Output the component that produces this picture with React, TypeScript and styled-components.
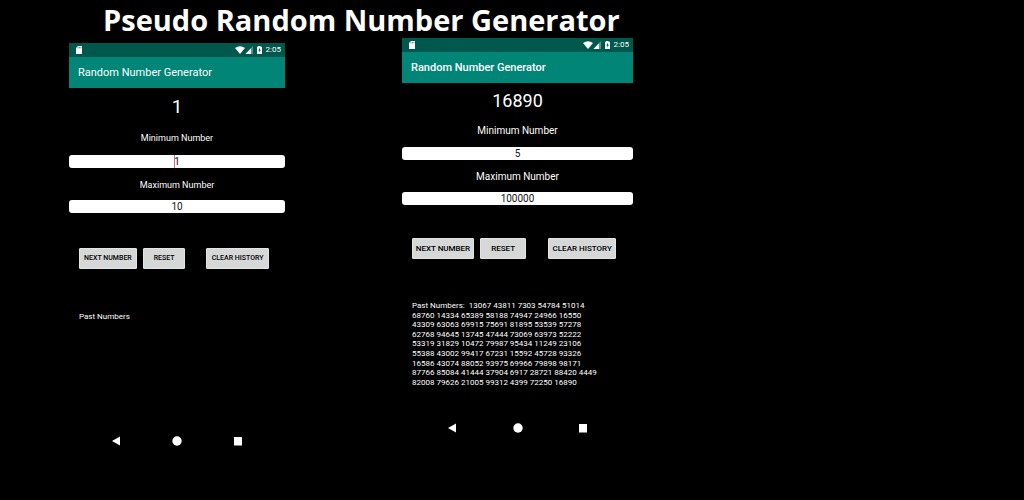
import React, { useState } from "react";
import styled, { createGlobalStyle } from "styled-components";

const GlobalStyle = createGlobalStyle`
  *, *::before, *::after { box-sizing: border-box; }
  body { margin: 0; background: #000; color: #fff; font-family: Roboto, sans-serif; }
`;

const Page = styled.main`
  min-height: 100vh;
  background: #000;
`;

const Heading = styled.h1`
  margin: 0;
  padding-left: 103px;
  height: 38px;
  font: 700 29px/40px "Open Sans", sans-serif;
  white-space: nowrap;
`;

const Phones = styled.div`
  display: grid;
  grid-template-columns: minmax(0, 69fr) minmax(0, 216fr) minmax(0, 117fr) minmax(0, 231fr) minmax(0, 391fr);
  align-items: start;
`;

const Screen = styled.section<{ $large: boolean }>`
  grid-column: ${(p) => (p.$large ? 4 : 2)};
  grid-row: 1;
  padding-top: ${(p) => (p.$large ? 0 : 5)}px;
  display: flex;
  flex-direction: column;
`;

const StatusBar = styled.div`
  display: flex;
  align-items: center;
  height: 14px;
  padding: 0 4px 0 7px;
  background: #00574b;
  font-size: 8px;
  line-height: 14px;
`;

const StatusIcons = styled.div`
  display: flex;
  align-items: center;
  gap: 4px;
  margin-left: auto;
  svg { display: block; }
`;

const AppBar = styled.h2<{ $large: boolean }>`
  margin: 0;
  padding-left: 9px;
  background: #008577;
  font-size: 11px;
  font-weight: ${(p) => (p.$large ? 500 : 400)};
  line-height: 31px;
  white-space: nowrap;
`;

const Result = styled.output<{ $large: boolean }>`
  display: block;
  padding-top: ${(p) => (p.$large ? 6 : 7)}px;
  font-size: ${(p) => (p.$large ? 18 : 19)}px;
  line-height: 24px;
  text-align: center;
`;

const Field = styled.div<{ $gap: number }>`
  display: flex;
  flex-direction: column;
  margin-top: ${(p) => p.$gap}px;
`;

const Label = styled.label<{ $large: boolean; $space: number }>`
  margin-bottom: ${(p) => p.$space}px;
  font-size: ${(p) => (p.$large ? 10 : 9)}px;
  line-height: 14px;
  text-align: center;
`;

const InputWrap = styled.div`
  position: relative;
  display: flex;
`;

const NumberInput = styled.input`
  width: 100%;
  height: 13px;
  padding: 0;
  border: 0;
  border-radius: 3px;
  background: #fff;
  color: #111;
  font: 10px/13px Roboto, sans-serif;
  text-align: center;
  outline: 0;
`;

const Caret = styled.span`
  position: absolute;
  left: calc(50% - 3px);
  top: 0;
  bottom: 0;
  width: 1px;
  background: #d0688c;
`;

const Actions = styled.div<{ $large: boolean }>`
  display: flex;
  column-gap: 6px;
  padding: 0 ${(p) => (p.$large ? "17px 0 10px" : "16px 0 10px")};
  margin-top: ${(p) => (p.$large ? 33 : 35)}px;
`;

const Button = styled.button<{ $large: boolean; $share: number; $apart?: boolean }>`
  flex: ${(p) => p.$share} 1 0;
  height: 21px;
  margin: 0 0 0 ${(p) => (p.$apart ? (p.$large ? 16 : 15) : 0)}px;
  padding: 0;
  border: 1px solid #e4e4e4;
  border-radius: 1px;
  background: #d6d7d7;
  color: #000;
  font: 500 ${(p) => (p.$large ? 8 : 7)}px/19px Roboto, sans-serif;
  text-transform: uppercase;
  white-space: nowrap;
`;

const History = styled.div<{ $large: boolean }>`
  min-height: ${(p) => (p.$large ? 122 : 124)}px;
  padding: 0 0 0 10px;
  margin-top: ${(p) => (p.$large ? 42 : 43)}px;
  font-size: 8px;
  line-height: 1.2;
  white-space: pre;
`;

const NavBar = styled.nav`
  display: flex;
  justify-content: space-between;
  padding: 0 20%;
`;

const NavButton = styled.button`
  display: flex;
  padding: 0;
  border: 0;
  background: none;
  color: #fff;
`;

const pastNumbers = [
  "13067 43811 7303 54784 51014",
  "68760 14334 65389 58188 74947 24966 16550",
  "43309 63063 69915 75691 81895 53539 57278",
  "62768 94645 13745 47444 73069 63973 52222",
  "53319 31829 10472 79987 95434 11249 23106",
  "55388 43002 99417 67231 15592 45728 93326",
  "16586 43074 88052 93975 69966 79898 98171",
  "87766 85084 41444 37904 6917 28721 88420 4449",
  "82008 79626 21005 99312 4399 72250 16890",
];

function SdCard() {
  return (
    <svg width="6" height="8" viewBox="0 0 6 8" fill="#fff" aria-hidden="true">
      <path d="M2 0H6V8H0V2Z" />
      <path d="M2 1V2.4M3.5 1V2.4M5 1V2.4" stroke="#00574b" strokeWidth=".6" />
    </svg>
  );
}

function Signals() {
  return (
    <svg width="27" height="8" viewBox="0 0 27 8" fill="#fff" aria-hidden="true">
      <path d="M0 2Q5 -1.5 10 2L5 8Z" />
      <path d="M18 0V8H10.500Z" opacity=".35" />
      <path d="M16 2.200V8H10.500Z" />
      <path d="M22 .8H23V0H25.500V.8H27V8H22Z" />
      <path d="M25 1.800L23.300 4.500H24.300V6.500L25.900 3.800H25Z" fill="#00574b" />
    </svg>
  );
}

function Nav() {
  return (
    <NavBar>
      <NavButton aria-label="Back">
        <svg width="8" height="10" viewBox="0 0 8 10" fill="currentColor"><path d="M8 .5V9.500L0 5Z" /></svg>
      </NavButton>
      <NavButton aria-label="Home">
        <svg width="10" height="10" viewBox="0 0 10 10" fill="currentColor"><circle cx="5" cy="5" r="4.700" /></svg>
      </NavButton>
      <NavButton aria-label="Recent apps">
        <svg width="8" height="10" viewBox="0 0 8 10" fill="currentColor"><path d="M0 1H8V9.500H0Z" /></svg>
      </NavButton>
    </NavBar>
  );
}

type PhoneProps = {
  id: string;
  large?: boolean;
  result: string;
  min: string;
  max: string;
  history?: string[];
  focused?: boolean;
};

function Phone({ id, large = false, result, min, max, history = [], focused }: PhoneProps) {
  const [low, setLow] = useState(min);
  const [high, setHigh] = useState(max);
  return (
    <Screen $large={large}>
      <StatusBar>
        <SdCard />
        <StatusIcons>
          <Signals />
          <span>2:05</span>
        </StatusIcons>
      </StatusBar>
      <AppBar $large={large}>Random Number Generator</AppBar>
      <Result $large={large}>{result}</Result>
      <Field $gap={large ? 11 : 12}>
        <Label $large={large} $space={large ? 9 : 10} htmlFor={`${id}-min`}>Minimum Number</Label>
        <InputWrap>
          <NumberInput id={`${id}-min`} inputMode="numeric" value={low} onChange={(e) => setLow(e.target.value)} />
          {focused && <Caret />}
        </InputWrap>
      </Field>
      <Field $gap={10}>
        <Label $large={large} $space={8} htmlFor={`${id}-max`}>Maximum Number</Label>
        <InputWrap>
          <NumberInput id={`${id}-max`} inputMode="numeric" value={high} onChange={(e) => setHigh(e.target.value)} />
        </InputWrap>
      </Field>
      <Actions $large={large}>
        <Button $large={large} $share={large ? 62 : 58}>Next Number</Button>
        <Button $large={large} $share={large ? 46 : 42}>Reset</Button>
        <Button $large={large} $share={large ? 68 : 63} $apart>Clear History</Button>
      </Actions>
      <History $large={large}>
        {history.length ? `Past Numbers:  ${history.join("\n")}` : "Past Numbers"}
      </History>
      <Nav />
    </Screen>
  );
}

export default function App() {
  return (
    <Page>
      <GlobalStyle />
      <Heading>Pseudo Random Number Generator</Heading>
      <Phones>
        <Phone id="first" result="1" min="1" max="10" focused />
        <Phone id="second" large result="16890" min="5" max="100000" history={pastNumbers} />
      </Phones>
    </Page>
  );
}
